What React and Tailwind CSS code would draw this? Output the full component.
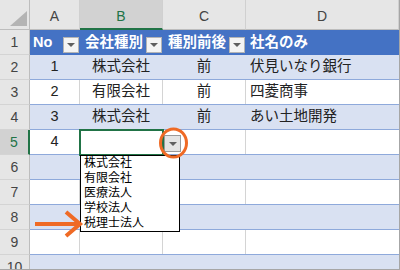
import React from 'react';

const FONT = "font-['Liberation_Sans','Noto_Sans_CJK_JP',sans-serif]";

const rows = [
    { n: 2, band: true, a: '1', b: '株式会社', c: '前', d: '伏見いなり銀行' },
    { n: 3, band: false, a: '2', b: '有限会社', c: '前', d: '四菱商事' },
    { n: 4, band: true, a: '3', b: '株式会社', c: '前', d: 'あい土地開発' },
    { n: 5, band: false, a: '4', b: '', c: '', d: '' },
    { n: 6, band: true },
    { n: 7, band: false },
    { n: 8, band: true },
    { n: 9, band: false },
    { n: 10, band: true },
];

const options = ['株式会社', '有限会社', '医療法人', '学校法人', '税理士法人'];

const Arrow = () => (
    <svg width="8" height="4" viewBox="0 0 8 4"><path d="M0 0H8L4 4Z" fill="#5f5f5f" /></svg>
);

const FilterButton = () => (
    <span className="self-end mb-[2px] w-4 h-4 shrink-0 bg-[#f4f4f4] border border-[#b4b4b4] flex items-center justify-center">
        <Arrow />
    </span>
);

const ColHead = ({ w, label, active }) => (
    <div className={`${w} h-full flex items-center justify-center pt-[4px] border-r border-[#d0d0d0] text-[14px] ${active ? 'bg-[#d2d2d2] text-[#217346] border-b-2 border-b-[#217346]' : 'bg-[#e6e6e6] text-[#444] border-b border-b-[#bdbdbd]'}`}>
        {label}
    </div>
);

const RowHead = ({ n, active }) => (
    <div className={`w-[30px] h-full flex items-center justify-center border-b border-b-[#d4d4d4] text-[14px] ${active ? 'bg-[#d2d2d2] text-[#217346] border-r-2 border-r-[#217346]' : 'bg-[#e6e6e6] text-[#444] border-r border-r-[#bdbdbd]'}`}>
        {n}
    </div>
);

export default function App() {
    return (
        <div className={`relative w-[400px] h-[270px] overflow-hidden bg-white border-r border-b border-[#a6a6a6] ${FONT}`}>
            {/* column letters */}
            <div className="flex h-[30px]">
                <div className="w-[30px] h-full bg-[#e6e6e6] border-r border-b border-[#bdbdbd] flex items-end justify-end pr-[2px] pb-[3px]">
                    <svg width="17" height="15" viewBox="0 0 17 15"><path d="M17 0V15H0Z" fill="#b4b4b4" /></svg>
                </div>
                <ColHead w="w-[50px]" label="A" />
                <ColHead w="w-[83px]" label="B" active />
                <ColHead w="w-[83px]" label="C" />
                <ColHead w="w-[153px]" label="D" />
            </div>

            {/* table header */}
            <div className="flex h-[25px]">
                <RowHead n={1} />
                <div className="flex flex-1 bg-[#4472c4] text-white font-bold text-[14.5px]">
                    <div className="w-[50px] flex items-center justify-between pl-[3px] pr-[1px]">No<FilterButton /></div>
                    <div className="w-[83px] flex items-center justify-between pl-[5px] pr-[1px]">会社種別<FilterButton /></div>
                    <div className="w-[83px] flex items-center justify-between pl-[5px] pr-[1px]">種別前後<FilterButton /></div>
                    <div className="flex-1 flex items-center pl-[4px]">社名のみ</div>
                </div>
            </div>

            {rows.map((r) => {
                const line = r.band ? 'border-r-[#d9e1f2]' : 'border-r-[#d4d4d4]';
                return (
                    <div key={r.n} className="flex h-[25px]">
                        <RowHead n={r.n} active={r.n === 5} />
                        <div className={`flex flex-1 border-b border-[#8ea9db] text-[14.5px] text-[#222] ${r.band ? 'bg-[#d9e1f2]' : 'bg-white'}`}>
                            <div className={`w-[50px] flex items-center justify-center border-r ${line}`}>{r.a}</div>
                            <div className={`w-[83px] flex items-center justify-center border-r ${line}`}>{r.b}</div>
                            <div className={`w-[83px] flex items-center justify-center border-r ${line}`}>{r.c}</div>
                            <div className="flex-1 flex items-center pl-[4px]">{r.d}</div>
                        </div>
                    </div>
                );
            })}

            {/* active cell B5 */}
            <div className="absolute left-[79px] top-[129px] w-[85px] h-[27px] border-2 border-[#217346]" />

            {/* dropdown button */}
            <div className="absolute left-[164px] top-[135px] w-[17px] h-[17px] bg-[#e4e4e4] border border-[#9a9a9a] flex items-center justify-center">
                <Arrow />
            </div>

            {/* dropdown list */}
            <div className="absolute left-[80px] top-[155px] w-[100px] bg-white border border-black text-[12px] leading-[15px] text-black">
                {options.map((o) => (
                    <div key={o} className="pl-[3px]">{o}</div>
                ))}
            </div>

            {/* orange circle */}
            <svg className="absolute left-[158px] top-[127px]" width="31" height="32" viewBox="0 0 31 32">
                <ellipse cx="15.5" cy="16" rx="13" ry="14" fill="none" stroke="#ef6a25" strokeWidth="3" />
            </svg>

            {/* orange arrow */}
            <svg className="absolute left-[34px] top-[208px]" width="50" height="32" viewBox="0 0 50 32">
                <path d="M1 16H45" stroke="#ef6a25" strokeWidth="4" />
                <path d="M32 4L46 16L32 28" fill="none" stroke="#ef6a25" strokeWidth="4" />
            </svg>
        </div>
    );
}
